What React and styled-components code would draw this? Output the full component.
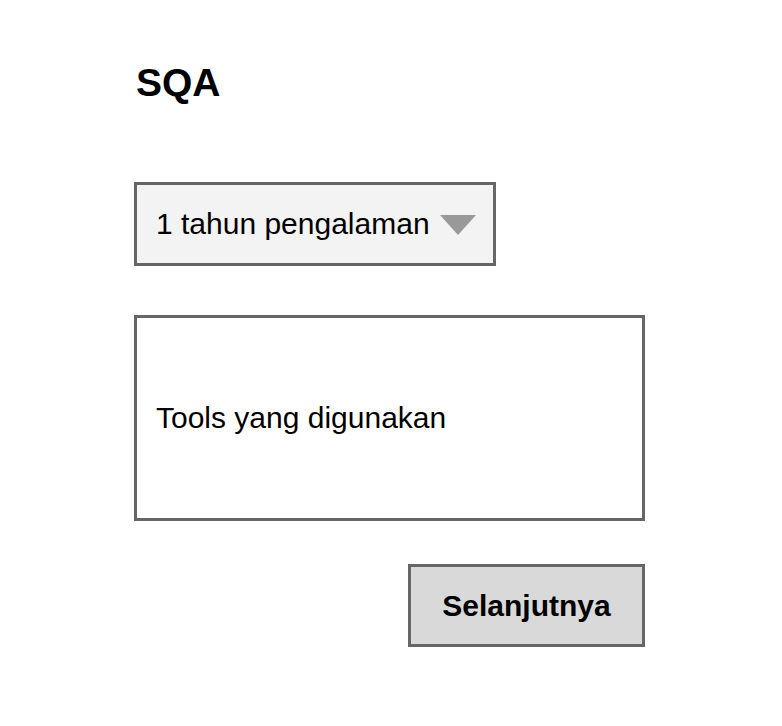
import styled, { createGlobalStyle } from 'styled-components';

const GlobalStyle = createGlobalStyle`
    html, body {
        margin: 0;
        padding: 0;
        background: #ffffff;
    }
    body {
        font-family: "Liberation Sans", Arial, sans-serif;
        color: #000000;
    }
`

const Page = styled.main`
    box-sizing: border-box;
    width: 100%;
    min-height: 726px;
    padding: 60px 0 0 134px;
`
const Column = styled.div`
    width: 511px;
    display: flex;
    flex-direction: column;
`
const Title = styled.h1`
    margin: 0 0 77px 2px;
    font-size: 39px;
    line-height: 45px;
    font-weight: 700;
`
const Dropdown = styled.div`
    box-sizing: border-box;
    width: 362px;
    height: 84px;
    padding: 0 17px 0 19px;
    display: flex;
    align-items: center;
    justify-content: space-between;
    border: 3px solid #666666;
    background: #f3f3f3;
    font-size: 30px;
    margin-bottom: 49px;
`
const Caret = styled.span`
    width: 0;
    height: 0;
    border-left: 18px solid transparent;
    border-right: 18px solid transparent;
    border-top: 20px solid #999999;
    margin-top: 2px;
`
const TextBox = styled.div`
    box-sizing: border-box;
    width: 511px;
    height: 206px;
    padding: 0 19px;
    display: flex;
    align-items: center;
    border: 3px solid #666666;
    background: #ffffff;
    font-size: 30px;
    margin-bottom: 43px;
`
const Actions = styled.div`
    display: flex;
    justify-content: flex-end;
`
const NextButton = styled.button`
    box-sizing: border-box;
    width: 237px;
    height: 83px;
    border: 3px solid #666666;
    background: #d9d9d9;
    font-family: "Liberation Sans", Arial, sans-serif;
    font-size: 30px;
    font-weight: 700;
    color: #000000;
    padding: 0;
    cursor: pointer;
`

export default function App() {
    return (
        <>
            <GlobalStyle />
            <Page>
                <Column>
                    <Title>SQA</Title>
                    <Dropdown>
                        <span>1 tahun pengalaman</span>
                        <Caret />
                    </Dropdown>
                    <TextBox>Tools yang digunakan</TextBox>
                    <Actions>
                        <NextButton>Selanjutnya</NextButton>
                    </Actions>
                </Column>
            </Page>
        </>
    )
}
